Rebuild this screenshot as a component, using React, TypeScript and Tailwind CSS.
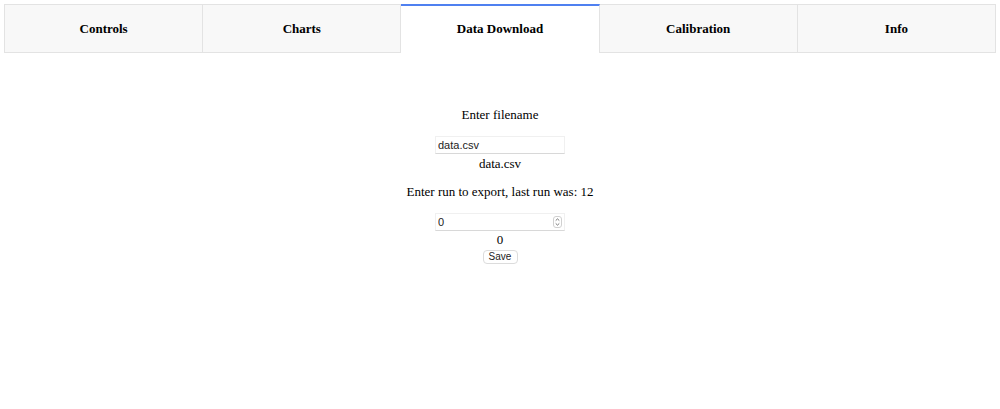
import React, { useState } from "react";

const tabs = ["Controls", "Charts", "Data Download", "Calibration", "Info"];

const App: React.FC = () => {
  const [active, setActive] = useState("Data Download");
  const [filename, setFilename] = useState("data.csv");
  const [run, setRun] = useState("0");

  return (
    <main className="min-h-screen bg-white text-black font-['Liberation_Serif',serif]">
      {/* Tab bar */}
      <div className="mx-1 mt-1 flex">
        {tabs.map((tab, i) => {
          const isActive = tab === active;
          return (
            <button
              key={tab}
              onClick={() => setActive(tab)}
              className={`flex-1 h-[49px] flex items-center justify-center text-[13px] font-bold border-r border-[#e3e3e3] ${
                i === 0 ? "border-l" : ""
              } ${
                isActive
                  ? "bg-white border-t-2 border-t-[#4f80f0] pb-[1px]"
                  : "bg-[#f8f8f8] border-t border-b"
              }`}
            >
              {tab}
            </button>
          );
        })}
      </div>

      {/* Download form */}
      <div className="flex flex-col items-center text-[13px] leading-[15px]">
        <p className="mt-[54px]">Enter filename</p>
        <input
          type="text"
          value={filename}
          onChange={(e) => setFilename(e.target.value)}
          className="mt-[14px] w-[130px] h-[18px] px-[2px] border border-[#f0f0f0] border-b-[#d8d8d8] font-['Liberation_Sans',sans-serif] text-[11px] text-[#222] outline-none"
        />
        <p className="mt-[2px]">{filename}</p>
        <p className="mt-[13px]">Enter run to export, last run was: 12</p>
        <div className="relative mt-[14px]">
          <input
            type="text"
            value={run}
            onChange={(e) => setRun(e.target.value)}
            className="w-[130px] h-[18px] px-[2px] border border-[#f0f0f0] border-b-[#d8d8d8] font-['Liberation_Sans',sans-serif] text-[11px] text-[#222] outline-none"
          />
          <svg
            className="absolute right-[3px] top-[3px]"
            width="9"
            height="12"
            viewBox="0 0 9 12"
          >
            <rect x="0.5" y="0.5" width="8" height="11" rx="2.5" fill="#fff" stroke="#d0d0d0" />
            <path d="M2.7 4.6 L4.5 2.9 L6.3 4.6" fill="none" stroke="#666" strokeWidth="0.9" />
            <path d="M2.7 7.4 L4.5 9.1 L6.3 7.4" fill="none" stroke="#666" strokeWidth="0.9" />
          </svg>
        </div>
        <p className="mt-[1px]">{run}</p>
        <button className="mt-[3px] w-[35px] h-[14px] flex items-center justify-center rounded-[4px] border border-[#dcdcdc] bg-white font-['Liberation_Sans',sans-serif] text-[10px] text-[#222] leading-none">
          Save
        </button>
      </div>
    </main>
  );
};

export default App;
